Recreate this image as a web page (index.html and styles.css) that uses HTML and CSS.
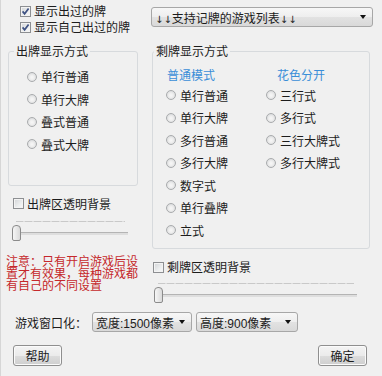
FILE: index.html
```html
<!DOCTYPE html>
<html lang="zh-CN">
<head>
<meta charset="utf-8">
<title>记牌设置</title>
<link rel="stylesheet" href="styles.css">
</head>
<body>
<div class="dialog">
  <div class="cols">
    <div class="left">
      <div class="checks">
        <label class="check"><span class="cb"><svg viewBox="0 0 11 11" width="11" height="11"><path d="M2.6 5.4 L4.6 7.8 L8.6 2.4" fill="none" stroke="#3f5283" stroke-width="1.7"/></svg></span>显示出过的牌</label>
        <label class="check"><span class="cb"><svg viewBox="0 0 11 11" width="11" height="11"><path d="M2.6 5.4 L4.6 7.8 L8.6 2.4" fill="none" stroke="#3f5283" stroke-width="1.7"/></svg></span>显示自己出过的牌</label>
      </div>
      <fieldset class="group group-left">
        <legend>出牌显示方式</legend>
        <div class="left-opts">
          <div class="opt"><span class="rb"></span>单行普通</div>
          <div class="opt"><span class="rb"></span>单行大牌</div>
          <div class="opt"><span class="rb"></span>叠式普通</div>
          <div class="opt"><span class="rb"></span>叠式大牌</div>
        </div>
      </fieldset>
      <label class="check bg-left"><span class="cb"></span>出牌区透明背景</label>
      <div class="slider slider-left"><div class="ticks"></div><div class="track"></div><div class="thumb"></div></div>
      <p class="note">注意：只有开启游戏后设<br>置才有效果，每种游戏都<br>有自己的不同设置</p>
    </div>
    <div class="right">
      <div class="combo combo-list"><span class="combo-text"><span class="arr">↓↓</span>支持记牌的游戏列表<span class="arr">↓↓</span></span><span class="arrow"></span></div>
      <fieldset class="group group-right">
        <legend>剩牌显示方式</legend>
        <div class="modes">
          <div class="mode-col col-normal">
            <div class="mode-title">普通模式</div>
            <div class="opt"><span class="rb"></span>单行普通</div>
            <div class="opt"><span class="rb"></span>单行大牌</div>
            <div class="opt"><span class="rb"></span>多行普通</div>
            <div class="opt"><span class="rb"></span>多行大牌</div>
            <div class="opt"><span class="rb"></span>数字式</div>
            <div class="opt"><span class="rb"></span>单行叠牌</div>
            <div class="opt"><span class="rb"></span>立式</div>
          </div>
          <div class="mode-col col-suit">
            <div class="mode-title">花色分开</div>
            <div class="opt"><span class="rb"></span>三行式</div>
            <div class="opt"><span class="rb"></span>多行式</div>
            <div class="opt"><span class="rb"></span>三行大牌式</div>
            <div class="opt"><span class="rb"></span>多行大牌式</div>
          </div>
        </div>
      </fieldset>
      <label class="check bg-right"><span class="cb"></span>剩牌区透明背景</label>
      <div class="slider slider-right"><div class="ticks"></div><div class="track"></div><div class="thumb"></div></div>
    </div>
  </div>
  <div class="window-row">
    <span class="win-label">游戏窗口化：</span>
    <div class="combo combo-w"><span class="combo-text">宽度:1500像素</span><span class="arrow"></span></div>
    <div class="combo combo-h"><span class="combo-text">高度:900像素</span><span class="arrow"></span></div>
  </div>
  <div class="buttons">
    <button class="btn">帮助</button>
    <button class="btn">确定</button>
  </div>
</div>
</body>
</html>
```
FILE: styles.css
```css
html, body {
  margin: 0;
  padding: 0;
  background: #f0f0f0;
}
body {
  font-family: "Noto Sans CJK SC", "Noto Sans CJK TC", sans-serif;
  font-size: 12px;
  color: #1c1c1c;
}
.dialog {
  width: 382px;
  height: 376px;
  box-shadow: inset 1px 0 #d6d6d6;
  overflow: hidden;
}
.cols {
  display: flex;
}
.left {
  width: 130px;
  margin-left: 8px;
  display: flex;
  flex-direction: column;
}
.right {
  width: 222px;
  margin-left: 13px;
  display: flex;
  flex-direction: column;
}
.checks {
  padding: 3px 0 0 12px;
}
.check {
  display: flex;
  align-items: center;
  gap: 3px;
  height: 16px;
  line-height: 16px;
  white-space: nowrap;
}
.cb {
  flex: none;
  width: 11px;
  height: 11px;
  box-sizing: border-box;
  border: 1px solid #8d8f92;
  background: linear-gradient(135deg, #d2d4d6 0%, #eceeef 60%, #fafafa 100%);
  box-shadow: inset 0 0 0 1px #f3f3f3;
  position: relative;
}
.cb svg {
  position: absolute;
  left: -1px;
  top: -1px;
}
.group {
  margin: 0;
  padding: 0;
  min-width: 0;
  border: 1px solid #d7dadd;
  border-radius: 3px;
  box-sizing: border-box;
}
.group legend {
  padding: 0 2px;
  height: 12px;
  line-height: 12px;
}
.group-left {
  margin-top: 10px;
  width: 130px;
}
.group-left legend {
  margin-left: 5px;
}
.left-opts {
  padding: 8.25px 0 29.75px 18px;
}
.opt {
  display: flex;
  align-items: center;
  gap: 4px;
  height: 22.5px;
  white-space: nowrap;
}
.rb {
  flex: none;
  width: 10px;
  height: 10px;
  box-sizing: border-box;
  border-radius: 50%;
  border: 1px solid #a9abad;
  background: radial-gradient(circle at 50% 55%, #f7f7f7 0%, #efefef 35%, #cfd1d3 100%);
}
.bg-left {
  margin-top: 9.5px;
  padding-left: 5px;
}
.slider {
  position: relative;
  height: 24px;
}
.slider-left {
  margin: 7.5px 0 0 4px;
  width: 117px;
}
.slider-right {
  margin: 6px 0 0 3px;
  width: 204px;
}
.ticks {
  margin: 2px 4px 0 4px;
  height: 1px;
  background: repeating-linear-gradient(90deg, #c9c9c9 0 7px, #dedede 7px 9px);
}
.track {
  margin: 10px 1px 0 4px;
  height: 2px;
  border-top: 1px solid #b4b4b4;
  background: #dedede;
}
.thumb {
  position: absolute;
  left: 0;
  top: 6px;
  width: 9px;
  height: 16px;
  box-sizing: border-box;
  border: 1px solid #8b8b8b;
  border-radius: 4px 4px 2px 2px;
  background: linear-gradient(90deg, #f6f6f6, #dadada);
}
.note {
  margin: 11.5px 0 0 -2px;
  color: #c5282b;
  line-height: 12px;
  white-space: nowrap;
}
.combo {
  display: flex;
  align-items: center;
  justify-content: space-between;
  box-sizing: border-box;
  height: 20px;
  padding: 0 6px 0 3px;
  border: 1px solid #a7a7a7;
  border-radius: 3px;
  background: linear-gradient(#f7f7f7 0%, #eeeeee 50%, #e2e2e2 51%, #d9d9d9 100%);
  white-space: nowrap;
}
.combo-text {
  font-family: "Liberation Sans", "Noto Sans CJK SC", sans-serif;
}
.arr {
  font-family: "DejaVu Sans", sans-serif;
  font-size: 10px;
  color: #222;
}
.arrow {
  width: 0;
  height: 0;
  border-left: 3.5px solid transparent;
  border-right: 3.5px solid transparent;
  border-top: 4px solid #111;
}
.combo-list {
  margin-top: 7px;
  width: 222px;
}
.group-right {
  margin: 18px 0 0 1px;
  width: 218px;
}
.group-right legend {
  margin-left: 1px;
}
.modes {
  display: flex;
  padding: 12px 0 6.75px 13px;
}
.col-normal {
  width: 100px;
}
.mode-title {
  color: #3a8ed8;
  height: 12px;
  line-height: 12px;
  margin-bottom: 2.75px;
  white-space: nowrap;
}
.col-normal .mode-title {
  padding-left: 1px;
}
.col-suit .mode-title {
  padding-left: 11px;
}
.bg-right {
  margin-top: 10px;
  padding-left: 2px;
}
.window-row {
  display: flex;
  align-items: center;
  height: 20px;
  margin-top: 7px;
  padding-left: 15px;
}
.win-label {
  width: 77px;
  white-space: nowrap;
}
.combo-w {
  width: 100px;
}
.combo-h {
  width: 102px;
  margin-left: 4px;
}
.buttons {
  display: flex;
  justify-content: space-between;
  margin-top: 13px;
  padding: 0 15px 0 13px;
}
.btn {
  width: 49px;
  height: 21px;
  padding: 0;
  font: inherit;
  color: #1c1c1c;
  border: 1px solid #8f8f8f;
  border-radius: 3px;
  background: linear-gradient(#f4f4f4 0%, #ebebeb 50%, #dddddd 51%, #cfcfcf 100%);
  box-shadow: inset 0 0 0 1px #fbfbfb;
}
```
